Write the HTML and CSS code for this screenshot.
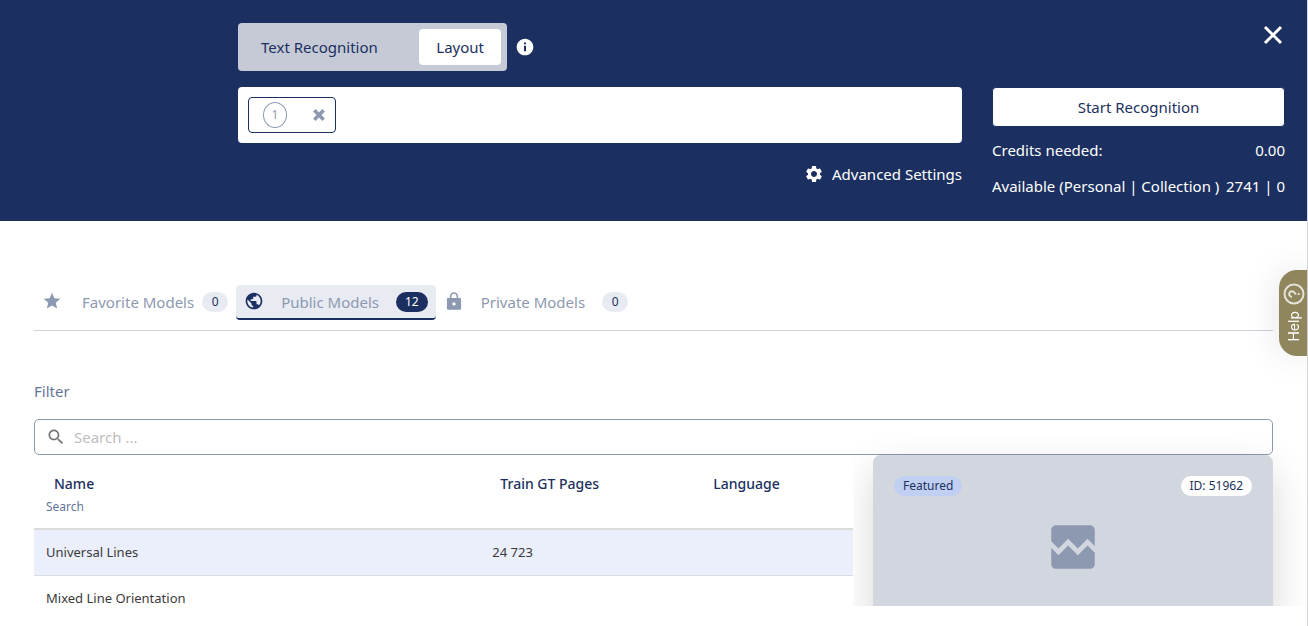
FILE: index.html
```html
<!DOCTYPE html>
<html lang="en">
<head>
<meta charset="utf-8">
<meta name="viewport" content="width=device-width, initial-scale=1">
<title>Text Recognition</title>
<link rel="stylesheet" href="styles.css">
</head>
<body>
<div class="dialog">
  <header class="header">
    <div class="setup">
      <div class="mode-row">
        <div class="modes">
          <button class="mode" type="button">Text Recognition</button>
          <button class="mode mode-active" type="button">Layout</button>
        </div>
        <svg class="info" viewBox="0 0 24 24" aria-hidden="true"><path d="M12 2C6.48 2 2 6.48 2 12s4.480 10 10 10 10-4.480 10-10S17.520 2 12 2zm1.200 15h-2.400v-6.500h2.400v6.500zm0-8.200h-2.400V6.500h2.400v2.300z"/></svg>
      </div>
      <div class="pages">
        <div class="chip">
          <span class="chip-number">1</span>
          <button class="chip-remove" type="button" aria-label="Remove page"><svg viewBox="0 0 12 12"><path d="M2 2l8 8M10 2l-8 8"/></svg></button>
        </div>
      </div>
      <button class="advanced" type="button">
        <svg viewBox="0 0 24 24" aria-hidden="true"><path d="M19.140 12.940c.04-.3.060-.61.060-.94 0-.32-.02-.64-.07-.94l2.030-1.580c.18-.14.23-.41.120-.61l-1.920-3.320c-.12-.22-.37-.29-.59-.22l-2.390.96c-.5-.38-1.030-.7-1.620-.94l-.36-2.540c-.04-.24-.24-.41-.48-.41h-3.840c-.24 0-.43.170-.47.410l-.36 2.540c-.59.240-1.130.57-1.620.94l-2.390-.96c-.22-.08-.47 0-.59.220L2.740 8.870c-.12.210-.08.470.12.610l2.030 1.580c-.05.3-.09.63-.09.940s.02.640.07.940l-2.030 1.580c-.18.140-.23.410-.12.610l1.920 3.320c.12.220.37.290.59.220l2.390-.96c.5.380 1.030.7 1.620.94l.36 2.540c.05.240.24.410.48.410h3.840c.24 0 .44-.17.470-.41l.36-2.540c.59-.24 1.130-.56 1.620-.94l2.390.96c.22.080.47 0 .59-.22l1.920-3.320c.12-.22.070-.47-.12-.61l-2.010-1.580zM12 15.600c-1.980 0-3.600-1.620-3.600-3.600s1.620-3.600 3.600-3.600 3.600 1.620 3.600 3.600-1.620 3.600-3.600 3.600z"/></svg>
        Advanced Settings
      </button>
    </div>
    <div class="summary">
      <button class="close" type="button" aria-label="Close"><svg viewBox="0 0 24 24"><path d="M4 4l16 16M20 4L4 20"/></svg></button>
      <button class="start" type="button">Start Recognition</button>
      <div class="credit"><span>Credits needed:</span><span>0.00</span></div>
      <div class="credit"><span>Available (Personal | Collection )</span><span>2741 | 0</span></div>
    </div>
  </header>
  <main class="main">
    <nav class="tabs">
      <button class="tab" type="button">
        <svg viewBox="0 0 24 24" aria-hidden="true"><path d="M12 17.270L18.180 21l-1.640-7.030L22 9.240l-7.190-.61L12 2 9.190 8.630 2 9.240l5.460 4.730L5.820 21z"/></svg>
        <span class="tab-label">Favorite Models</span><span class="count">0</span>
      </button>
      <button class="tab tab-active" type="button">
        <svg viewBox="0 0 24 24" aria-hidden="true"><path d="M12 2C6.480 2 2 6.480 2 12s4.480 10 10 10 10-4.480 10-10S17.520 2 12 2zm-1 17.930c-3.950-.49-7-3.850-7-7.930 0-.62.080-1.210.21-1.790L9 15v1c0 1.100.9 2 2 2v1.930zm6.900-2.540c-.26-.81-1-1.390-1.900-1.390h-1v-3c0-.55-.45-1-1-1H8v-2h2c.55 0 1-.45 1-1V7h2c1.100 0 2-.9 2-2v-.41c2.930 1.190 5 4.060 5 7.410 0 2.080-.8 3.970-2.100 5.390z"/></svg>
        <span class="tab-label">Public Models</span><span class="count">12</span>
      </button>
      <button class="tab" type="button">
        <svg viewBox="0 0 24 24" aria-hidden="true"><path d="M19 8.500h-2V6.500C17 3.700 14.800 1.500 12 1.500S7 3.700 7 6.500v2H5c-1 0-1.500.6-1.500 1.500v11c0 1 .6 1.500 1.500 1.500h14c1 0 1.500-.6 1.500-1.500V10c0-1-.6-1.500-1.500-1.500zM12 17.500a2 2 0 1 1 0-4 2 2 0 0 1 0 4zm3.100-9H8.900v-2c0-1.710 1.390-3.100 3.100-3.100s3.100 1.390 3.100 3.100v2z"/></svg>
        <span class="tab-label">Private Models</span><span class="count">0</span>
      </button>
    </nav>
    <label class="filter-label" for="filter">Filter</label>
    <div class="search">
      <svg viewBox="0 0 24 24" aria-hidden="true"><path d="M15.500 14h-.79l-.28-.27C15.410 12.590 16 11.110 16 9.500 16 5.910 13.090 3 9.500 3S3 5.910 3 9.500 5.910 16 9.500 16c1.610 0 3.090-.59 4.230-1.570l.27.280v.79l5 4.990L20.490 19l-4.990-5zm-6 0C7.010 14 5 11.990 5 9.500S7.010 5 9.500 5 14 7.010 14 9.500 11.990 14 9.500 14z"/></svg>
      <input id="filter" type="text" placeholder="Search ...">
    </div>
    <div class="results">
      <div class="list">
        <table class="models">
          <thead>
            <tr>
              <th class="col-name" scope="col"><span class="heading">Name</span><span class="sub">Search</span></th>
              <th class="col-pages" scope="col"><span class="heading">Train GT Pages</span></th>
              <th scope="col"><span class="heading">Language</span></th>
            </tr>
          </thead>
          <tbody>
            <tr class="selected"><td>Universal Lines</td><td>24 723</td><td></td></tr>
            <tr><td>Mixed Line Orientation</td><td></td><td></td></tr>
          </tbody>
        </table>
      </div>
      <article class="card">
        <div class="card-tags"><span class="tag">Featured</span><span class="tag tag-id">ID: 51962</span></div>
        <svg class="placeholder" viewBox="0 0 24 24" aria-hidden="true"><path d="M21 5v6.590l-3-3.010-4 4.010-4-4-4 4-3-3.010V5c0-1.100.9-2 2-2h14c1.100 0 2 .9 2 2zm-3 6.420l3 3.010V19c0 1.100-.9 2-2 2H5c-1.100 0-2-.9-2-2v-6.580l3 2.990 4-4 4 4 4-3.990z"/></svg>
      </article>
    </div>
  </main>
</div>
<button class="help" type="button">
  <span>Help</span>
  <svg viewBox="0 0 24 24" aria-hidden="true"><circle cx="12" cy="12" r="9.500"/><path d="M9.200 10a2.800 2.800 0 1 1 4.300 2.300c-1 .6-1.500 1-1.500 2M12 15.800v1.800"/></svg>
</button>
</body>
</html>
```
FILE: styles.css
```css
* { box-sizing: border-box; }
body {
  margin: 0;
  background: #fff;
  color: #3a3a3a;
  font: 15px/24px "Noto Sans", sans-serif;
}
button {
  padding: 0;
  border: 0;
  background: none;
  color: inherit;
  font: inherit;
  cursor: pointer;
}
svg { display: block; flex: none; fill: currentColor; }
.dialog {
  display: flex;
  flex-direction: column;
  height: 100vh;
  padding-bottom: 20px;
  overflow: hidden;
  border-right: 1px solid #d6d8dc;
}

.header {
  display: grid;
  grid-template-columns: minmax(0, 1fr) 293px;
  gap: 30px;
  flex: none;
  padding: 23px 22px;
  padding-left: 238px;
  background: #1b3060;
  color: #fff;
}
.setup { display: flex; flex-direction: column; gap: 16px; }
.mode-row { display: flex; align-items: center; gap: 8px; }
.modes {
  display: flex;
  justify-content: space-between;
  width: 269px;
  padding: 6px;
  border-radius: 4px;
  background: #c5cad6;
  color: #1b3060;
}
.mode { height: 36px; padding: 0 17px; border-radius: 4px; }
.mode-active { background: #fff; }
.info { width: 20px; height: 20px; }
.pages { padding: 10px; border-radius: 4px; background: #fff; }
.chip {
  display: flex;
  align-items: center;
  justify-content: space-between;
  width: 88px;
  height: 36px;
  padding: 0 9px 0 14px;
  border: 1px solid #1b3060;
  border-radius: 4px;
  color: #8d99b1;
}
.chip-number {
  width: 24px;
  height: 26px;
  border: 1px solid #8d99b1;
  border-radius: 50%;
  font-size: 12px;
  text-align: center;
}
.chip-remove svg { width: 14px; height: 14px; stroke: currentColor; stroke-width: 3; }
.advanced {
  display: flex;
  align-items: center;
  align-self: flex-end;
  gap: 8px;
  margin-top: 3px;
}
.advanced svg { width: 20px; height: 20px; }

.summary { display: flex; flex-direction: column; gap: 12px; }
.close { align-self: flex-end; height: 24px; margin-bottom: 28px; }
.close svg { width: 24px; height: 24px; stroke: currentColor; stroke-width: 3; }
.start {
  height: 40px;
  margin-bottom: -1px;
  border: 1px solid #1b3060;
  border-radius: 4px;
  background: #fff;
  color: #1b3060;
}
.credit { display: flex; justify-content: space-between; white-space: nowrap; }

.main { flex: 1; min-height: 0; overflow: hidden; padding: 64px 34px 0; }
.tabs {
  display: flex;
  align-items: flex-start;
  height: 46px;
  border-bottom: 1px solid #ced2dd;
}
.tab {
  display: flex;
  align-items: center;
  height: 35px;
  padding: 0 8px;
  border-bottom: 2px solid transparent;
  border-radius: 4px;
  color: #8d99b1;
}
.tab svg { width: 20px; height: 20px; margin-bottom: 2px; }
.tab-label { margin: 0 8px 0 20px; }
.tab:nth-child(n+2) .tab-label { margin: 0 17px; }
.tab-active { border-color: #1b3060; background: #e8ebf2; }
.tab-active svg { color: #1b3060; }
.count {
  min-width: 26px;
  padding: 0 9px;
  border-radius: 12px;
  background: #e8ebf2;
  color: #1b3060;
  font-size: 12px;
  line-height: 20px;
}
.tab-active .count { background: #1b3060; color: #fff; }

.filter-label { display: block; padding: 48px 0 16px; color: #64759a; }
.search {
  display: flex;
  align-items: center;
  gap: 8px;
  height: 36px;
  padding: 0 11px;
  border: 1px solid #8d99b1;
  border-radius: 5px;
  background: #fff;
}
.search svg { width: 20px; height: 20px; color: #757575; }
.search input {
  flex: 1;
  min-width: 0;
  padding: 0;
  border: 0;
  outline: 0;
  background: none;
  font: inherit;
}
.search input::placeholder { color: #bdbdbd; }

.results { display: grid; grid-template-columns: minmax(0, 1fr) 400px; gap: 20px; }
.list { z-index: 1; background: #fff; }
.models {
  width: 100%;
  border-collapse: collapse;
  table-layout: fixed;
  font-size: 13px;
  line-height: 22px;
  text-align: left;
}
.col-name { width: 54.5%; }
.col-pages { width: 26%; }
.models th { height: 74px; padding: 18px 12px 0; border-bottom: 2px solid #dcdcdc; vertical-align: top; }
.models td { height: 46px; padding: 0 12px; border-bottom: 1px solid #dcdce0; }
.heading { display: block; padding-left: 8px; color: #1b3060; font-size: 14px; font-weight: 500; }
.sub { color: #64759a; font-size: 12px; font-weight: 400; }
.selected { background: #ebeffb; }

.card {
  display: flex;
  flex-direction: column;
  align-items: center;
  gap: 22px;
  min-height: 280px;
  padding: 21px;
  border-radius: 8px;
  background: #d2d6df;
  box-shadow: 0 16px 40px rgba(0, 0, 0, 0.16);
}
.card-tags { display: flex; justify-content: space-between; width: 100%; }
.tag {
  padding: 0 9px;
  border-radius: 10px;
  background: #c1d0f2;
  color: #1b3060;
  font-size: 12px;
  line-height: 20px;
}
.tag-id { background: #fff; }
.placeholder { width: 58px; height: 58px; color: #8d99b1; }

.help {
  position: fixed;
  top: 270px;
  right: 1px;
  display: flex;
  flex-direction: column-reverse;
  align-items: center;
  justify-content: space-between;
  width: 28px;
  height: 86px;
  padding: 12px 0 14px 2px;
  border-radius: 18px 0 0 18px;
  background: #8f865e;
  box-shadow: 0 0 36px rgba(0, 0, 0, 0.12);
  color: #fff;
  font: 14px/20px Inter, sans-serif;
}
.help span { writing-mode: vertical-rl; transform: rotate(180deg); }
.help svg {
  width: 24px;
  height: 24px;
  fill: none;
  stroke: #e6e3d8;
  stroke-width: 2;
  transform: rotate(-90deg);
}
```
